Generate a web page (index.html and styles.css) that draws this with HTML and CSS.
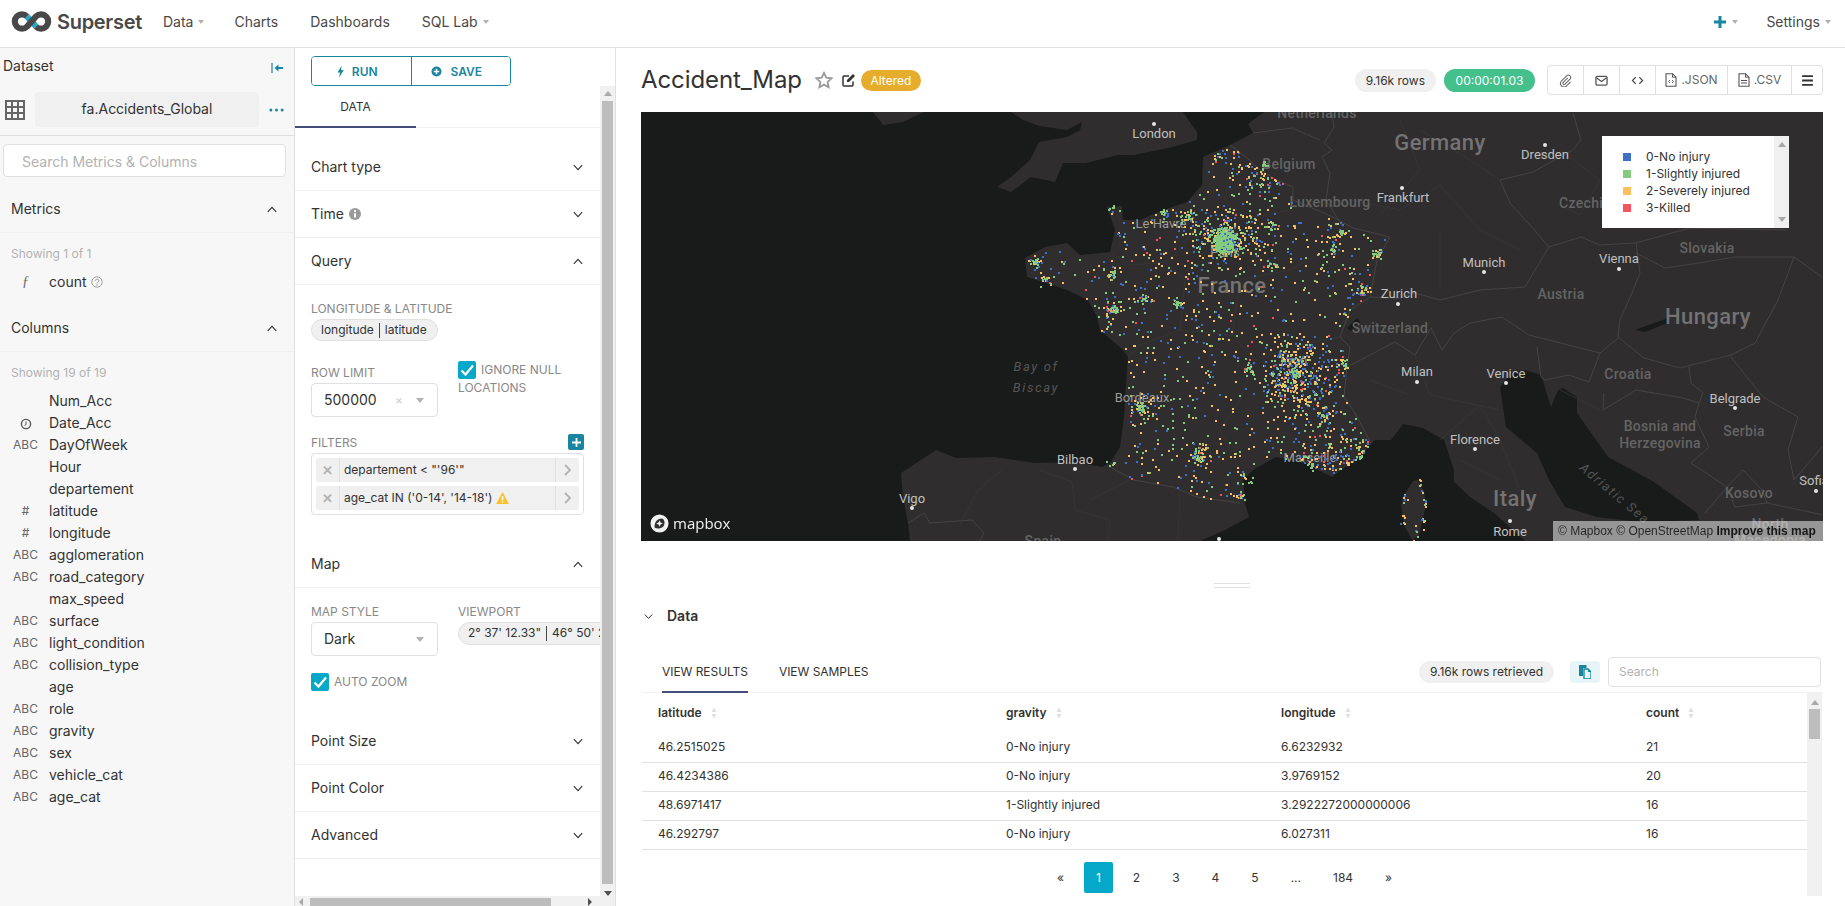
FILE: index.html
```html
<!DOCTYPE html>
<html lang="en">
<head>
<meta charset="utf-8">
<title>Accident_Map</title>
<link rel="stylesheet" href="styles.css">
</head>
<body>
<svg class="sprite" aria-hidden="true">
  <symbol id="down" viewBox="0 0 12 8"><path d="M1 1.2 6 6.6 11 1.2" fill="none" stroke="#323232" stroke-width="1.3"/></symbol>
  <symbol id="up" viewBox="0 0 12 8"><path d="M1 6.8 6 1.4 11 6.8" fill="none" stroke="#323232" stroke-width="1.3"/></symbol>
  <symbol id="sort" viewBox="0 0 6 12"><path d="M3 0.5 5.6 5H.4zM3 11.5.4 7h5.2z" fill="#e0e0e0"/></symbol>
  <symbol id="check" viewBox="0 0 18 18"><path d="M3.5 9.5 7.5 13.5 15 4.5" fill="none" stroke="#fff" stroke-width="2.2"/></symbol>
</svg>

<nav class="nav">
  <svg class="logo" viewBox="0 0 42 22">
    <path d="M16.3 5.7 25.7 16.3" fill="none" stroke="#20a7c9" stroke-width="6.4"/>
    <path d="M16.3 5.7A7.5 7.5 0 1 0 16.3 16.3L25.7 5.7A7.5 7.5 0 1 1 25.7 16.3" fill="none" stroke="#484848" stroke-width="6.4"/>
  </svg>
  <span class="brand">Superset</span>
  <a class="nav-item nav-data">Data<i class="caret"></i></a>
  <a class="nav-item nav-charts">Charts</a>
  <a class="nav-item nav-dash">Dashboards</a>
  <a class="nav-item nav-sql">SQL Lab<i class="caret"></i></a>
  <span class="nav-fill"></span>
  <svg class="nav-plus" viewBox="0 0 12 12"><path d="M6 0v12M0 6h12" stroke="#1a85a0" stroke-width="3"/></svg>
  <i class="caret caret-plus"></i>
  <a class="nav-item nav-settings">Settings<i class="caret"></i></a>
</nav>

<main class="main">
  <aside class="side">
    <div class="side-head">
      <span>Dataset</span>
      <svg class="collapse" viewBox="0 0 12 12"><path d="M1 1v10" stroke="#1a85a0" stroke-width="1.2"/><path d="M3.5 6 7.5 2.5V5H12V7H7.5V9.5z" fill="#1a85a0"/></svg>
    </div>
    <div class="ds-row">
      <svg class="grid-ic" viewBox="0 0 20 20"><path d="M1 1h18v18H1zM7 1v18M13 1v18M1 7h18M1 13h18" fill="none" stroke="#666" stroke-width="2"/></svg>
      <div class="ds-name">fa.Accidents_Global</div>
      <svg class="ds-more" viewBox="0 0 16 4"><circle cx="2" cy="2" r="1.6"/><circle cx="8" cy="2" r="1.6"/><circle cx="14" cy="2" r="1.6"/></svg>
    </div>
    <div class="side-search">Search Metrics &amp; Columns</div>

    <div class="side-sec side-sec-m"><span>Metrics</span><svg class="chev"><use href="#up"/></svg></div>
    <div class="showing showing-m">Showing 1 of 1</div>
    <ul class="cols cols-m">
      <li><b class="ty ty-f">ƒ</b>count
        <svg class="q-ic" viewBox="0 0 12 12"><circle cx="6" cy="6" r="5.2" fill="none" stroke="#999" stroke-width=".9"/><path d="M4.3 4.8C4.3 2.7 7.8 2.7 7.8 4.8 7.8 6 6 6 6 7.4" fill="none" stroke="#999"/><circle cx="6" cy="9" r=".7" fill="#999"/></svg>
      </li>
    </ul>

    <div class="side-sec side-sec-c"><span>Columns</span><svg class="chev"><use href="#up"/></svg></div>
    <div class="showing showing-c">Showing 19 of 19</div>
    <ul class="cols">
      <li><b class="ty"></b>Num_Acc</li>
      <li><b class="ty"><svg class="clock" viewBox="0 0 12 12"><circle cx="6" cy="6" r="4.6" fill="none" stroke="#555" stroke-width="1.4"/><path d="M6 3.5V6.5L4.5 7.5" fill="none" stroke="#555"/></svg></b>Date_Acc</li>
      <li><b class="ty">ABC</b>DayOfWeek</li>
      <li><b class="ty"></b>Hour</li>
      <li><b class="ty"></b>departement</li>
      <li><b class="ty">#</b>latitude</li>
      <li><b class="ty">#</b>longitude</li>
      <li><b class="ty">ABC</b>agglomeration</li>
      <li><b class="ty">ABC</b>road_category</li>
      <li><b class="ty"></b>max_speed</li>
      <li><b class="ty">ABC</b>surface</li>
      <li><b class="ty">ABC</b>light_condition</li>
      <li><b class="ty">ABC</b>collision_type</li>
      <li><b class="ty"></b>age</li>
      <li><b class="ty">ABC</b>role</li>
      <li><b class="ty">ABC</b>gravity</li>
      <li><b class="ty">ABC</b>sex</li>
      <li><b class="ty">ABC</b>vehicle_cat</li>
      <li><b class="ty">ABC</b>age_cat</li>
    </ul>
  </aside>

  <section class="ctrl">
    <div class="ctrl-top">
      <div class="run-group">
        <button class="run-btn"><svg class="bolt" viewBox="0 0 8 14"><path d="M5.2 0 .6 8H3.4L2.4 14 7.6 5.4H4.6z" fill="#1a85a0"/></svg>RUN</button>
        <button class="run-btn"><svg class="plus-c" viewBox="0 0 12 12"><circle cx="6" cy="6" r="5.5" fill="#1a85a0"/><path d="M6 3v6M3 6h6" stroke="#fff" stroke-width="1.6"/></svg>SAVE</button>
      </div>
    </div>
    <div class="ctrl-body">
      <div class="ctrl-content">
        <div class="ctrl-tabs"><div class="ctrl-tab">DATA</div></div>
        <div class="sec sec-first">Chart type<svg class="chev"><use href="#down"/></svg></div>
        <div class="sec"><span>Time <svg class="info" viewBox="0 0 12 12"><circle cx="6" cy="6" r="6" fill="#999"/><path d="M6 5.2V9.6" stroke="#fff" stroke-width="2"/><circle cx="6" cy="3.1" r="1.1" fill="#fff"/></svg></span><svg class="chev"><use href="#down"/></svg></div>
        <div class="sec">Query<svg class="chev"><use href="#up"/></svg></div>
        <div class="sec-body">
          <div class="lbl">LONGITUDE &amp; LATITUDE</div>
          <div class="pill-field"><span>longitude</span><i class="pill-sep"></i><span>latitude</span></div>
          <div class="two">
            <div class="col col-pad">
              <div class="lbl">ROW LIMIT</div>
              <div class="select"><span>500000</span><span class="sel-x">×</span><i class="sel-caret"></i></div>
            </div>
            <div class="col">
              <div class="chk-label"><svg class="chk"><use href="#check"/></svg><span class="chk-t">IGNORE NULL LOCATIONS</span></div>
            </div>
          </div>
          <div class="filters-head"><span class="lbl">FILTERS</span><span class="add"><svg viewBox="0 0 10 10"><path d="M5 0v10M0 5h10" stroke="#fff" stroke-width="2"/></svg></span></div>
          <div class="filters">
            <div class="filter"><span class="f-x">✕</span><span class="f-t">departement &lt; "'96'"</span><span class="f-go"><svg viewBox="0 0 7 12"><path d="M1 1 6 6 1 11" fill="none" stroke="#b2b2b2" stroke-width="1.8"/></svg></span></div>
            <div class="filter"><span class="f-x">✕</span><span class="f-t">age_cat IN ('0-14', '14-18') <svg class="warn" viewBox="0 0 14 13"><path d="M7 0 14 13H0z" fill="#fbc02d"/><path d="M7 4.5V9" stroke="#fff" stroke-width="1.6"/><circle cx="7" cy="10.8" r=".9" fill="#fff"/></svg></span><span class="f-go"><svg viewBox="0 0 7 12"><path d="M1 1 6 6 1 11" fill="none" stroke="#b2b2b2" stroke-width="1.8"/></svg></span></div>
          </div>
        </div>
        <div class="sec sec-map">Map<svg class="chev"><use href="#up"/></svg></div>
        <div class="sec-body">
          <div class="two two-map">
            <div class="col">
              <div class="lbl">MAP STYLE</div>
              <div class="select"><span>Dark</span><i class="sel-caret"></i></div>
            </div>
            <div class="col">
              <div class="lbl">VIEWPORT</div>
              <div class="pill-field pill-vp"><span>2° 37' 12.33"</span><i class="pill-sep"></i><span>46° 50' 21.04"</span></div>
            </div>
          </div>
          <div class="auto"><svg class="chk"><use href="#check"/></svg><span class="chk-t">AUTO ZOOM</span></div>
        </div>
        <div class="sec sec-ps">Point Size<svg class="chev"><use href="#down"/></svg></div>
        <div class="sec">Point Color<svg class="chev"><use href="#down"/></svg></div>
        <div class="sec">Advanced<svg class="chev"><use href="#down"/></svg></div>
      </div>
      <div class="vbar"><i class="arr arr-up"></i><div class="vthumb"></div><i class="arr arr-dn"></i></div>
    </div>
    <div class="hbar"><i class="arr-l"></i><div class="hthumb"></div><i class="arr-r"></i></div>
  </section>

  <section class="pane">
    <header class="head">
      <h1 class="title">Accident_Map</h1>
      <svg class="star" viewBox="0 0 24 24"><path d="M12 2.500 15 9l7 .8-5.200 4.800 1.400 7L12 18.200l-6.200 3.400 1.400-7L2 9.800 9 9z" fill="none" stroke="#999" stroke-width="2.400"/></svg>
      <svg class="edit" viewBox="0 0 14 14"><path d="M11 8.500V12a1 1 0 0 1-1 1H2a1 1 0 0 1-1-1V4a1 1 0 0 1 1-1H7" fill="none" stroke="#323232" stroke-width="1.500"/><path d="M5 7 11 1l2 2-6 6H5z" fill="#323232"/></svg>
      <span class="altered">Altered</span>
      <span class="head-fill"></span>
      <span class="tag">9.16k rows</span>
      <span class="tag tag-ok">00:00:01.03</span>
      <div class="btns">
        <a class="btn"><svg class="btn-ic" viewBox="0 0 14 14"><path d="M9.500 4.200 4.600 9.100a1.300 1.300 0 0 0 1.900 1.800l5.300-5.300a2.500 2.500 0 0 0-3.600-3.600L2.800 7.400a3.800 3.800 0 0 0 5.400 5.400L12.500 8.500" fill="none" stroke="#666" stroke-width="1.100"/></svg></a>
        <a class="btn"><svg class="btn-ic" viewBox="0 0 14 14"><rect x="1" y="2.500" width="12" height="9.500" rx="1.500" fill="none" stroke="#555" stroke-width="1.400"/><path d="M1.500 4 7 8 12.500 4" fill="none" stroke="#555" stroke-width="1.400"/></svg></a>
        <a class="btn"><svg class="btn-ic" viewBox="0 0 14 14"><path d="M5 3.500 1.500 7 5 10.500M9 3.500 12.500 7 9 10.500" fill="none" stroke="#444" stroke-width="1.200"/></svg></a>
        <a class="btn btn-t"><svg class="btn-file" viewBox="0 0 12 14"><path d="M1 .7H7.500L11 4.200V13.300H1z" fill="none" stroke="#555" stroke-width="1.100"/><path d="M7.500 .7V4.200H11" fill="none" stroke="#555"/><path d="M3.700 8.500 5 7M3.700 8.500 5 10M8.300 8.500 7 7M8.300 8.500 7 10" stroke="#555" stroke-width=".9"/></svg>.JSON</a>
        <a class="btn btn-t"><svg class="btn-file" viewBox="0 0 12 14"><path d="M1 .7H7.500L11 4.200V13.300H1z" fill="none" stroke="#555" stroke-width="1.100"/><path d="M7.500 .7V4.200H11M3 7.500H9M3 10H9" fill="none" stroke="#555"/></svg>.CSV</a>
        <a class="btn btn-m"><svg class="btn-ic" viewBox="0 0 12 12"><path d="M1 2h10M1 6h10M1 10h10" stroke="#323232" stroke-width="1.700"/></svg></a>
      </div>
    </header>

    <div class="map">
      <svg class="map-svg" viewBox="641 112 1182 429" preserveAspectRatio="none">
        <rect x="641" y="112" width="1182" height="429" fill="#2f2d2d"/>
        <!-- sea -->
        <path class="sea" d="M641 112H1265L1257 117 1248 124 1253 133 1230 145 1203 157 1202 185 1187 202 1163 210 1140 220 1123 220 1122 206 1107 207 1115 230 1110 252 1080 255 1067 243 1045 247 1025 258 1027 277 1043 282 1067 290 1088 300 1097 317 1100 330 1123 350 1128 357 1126 383 1124 417 1120 447 1110 463 1102 467 1075 462 1035 463 995 457 956 458 936 450 901 473 903 497 908 523 910 541H641z"/>
        <path class="sea" d="M1200 541 1225 530 1249 517 1245 503 1243 480 1253 470 1276 457 1304 463 1332 477 1359 457 1375 440 1391 440 1403 424 1423 428 1444 440 1454 470 1454 482 1470 497 1494 513 1525 541z"/>
        <path class="sea" d="M1500 387 1512 372 1525 370 1541 375 1551 407 1558 390 1563 388 1577 397 1577 413 1608 457 1654 482 1697 513 1699 520 1640 522 1597 517 1565 507 1549 480 1537 453 1506 427 1502 400z"/>
        <path class="sea" d="M1635 330 1668 318 1670 322 1645 332z"/>
        <path class="sea" d="M1347 328 1357 318 1360 322 1351 331z"/>
        <!-- land over the Atlantic -->
        <path class="land" d="M1011 112 1023 120 1039 126 1067 130 1082 122 1080 130 1067 137 1039 142 1030 160 1011 177 997 187 1011 192 1031 177 1055 182 1063 163 1086 163 1118 155 1134 155 1173 147 1197 140 1197 132 1185 115 1183 112z"/>
        <path class="land" d="M873 112 883 125 903 122 924 112z"/>
        <path class="land" d="M1413 481 1418 480 1424 492 1426 505 1419 536 1412 540 1404 525 1401 505 1403 497z"/>
        <!-- country borders -->
        <g class="bd">
          <path d="M1230 145 1247 158 1260 170 1277 180 1293 187 1293 200 1333 217 1353 228 1390 237 1377 260 1370 297 1350 310 1340 337 1350 347 1347 367 1344 397 1355 413 1371 443"/>
          <path d="M1253 133 1292 128 1320 140M1332 113 1334 127 1324 143 1332 150 1322 157 1330 173 1326 200 1343 227"/>
          <path d="M1370 297 1400 298 1415 293 1440 300 1480 290 1525 287 1549 247 1530 225 1510 203 1500 180 1533 172 1573 150 1581 140 1573 113"/>
          <path d="M1549 247 1581 237 1600 245 1636 243 1690 228 1786 230M1636 243 1640 273 1632 293 1620 320 1618 337 1644 358 1680 368 1731 355 1755 343 1778 300 1794 257 1822 277M1636 253 1665 268 1699 263 1735 257 1794 257"/>
          <path d="M1347 367 1395 342 1415 355 1431 328 1442 350 1454 333 1470 323 1502 317 1529 335 1600 353 1618 338M1537 347 1541 377 1545 380 1569 375 1589 382 1600 353"/>
          <path d="M1604 393 1603 410 1636 390 1683 398 1699 403 1695 417 1709 447 1691 463 1727 487 1705 513M1689 367 1691 383 1703 393 1699 403M1731 357 1763 397 1798 417 1788 450 1794 480 1822 447M1727 487 1743 470 1762 490 1767 503 1735 507 1727 487M1767 503 1800 510 1823 515"/>
          <path d="M1110 467 1134 480 1173 487 1197 497 1240 503M908 523 924 513 930 523 972 520 984 533 980 541"/>
        </g>
        <g class="bd-dim">
          <path d="M1110 252 1130 265 1165 262 1180 250 1200 220M1165 262 1185 280 1180 330 1140 345 1128 357M1180 330 1232 335 1255 360 1240 400 1220 430 1240 470M1232 335 1240 280 1290 270 1330 248M1255 360 1300 345 1340 337M1230 172 1225 200 1240 220 1290 210"/>
          <path d="M1002 470 978 490 960 525M1040 470 1072 482 1075 510 1110 520 1108 541M1130 480 1090 500M1180 490 1178 541"/>
          <path d="M1415 355 1430 395 1500 410M1440 440 1480 405 1500 440 1510 465 1520 490M1460 460 1500 480M1370 380 1410 395M1560 390 1600 410"/>
          <path d="M1350 200 1400 210 1440 185 1480 230 1520 250M1420 130 1470 160 1500 180M1440 230 1440 290M1400 120 1420 170 1380 215M1560 150 1600 180 1580 215 1560 205"/>
        </g>
        <!-- city dots -->
        <g class="dots">
          <circle cx="1154" cy="124" r="2"/><circle cx="1402" cy="188" r="2"/><circle cx="1545" cy="145" r="2"/><circle cx="1484" cy="272" r="2"/><circle cx="1619" cy="269" r="2"/><circle cx="1398" cy="304" r="2"/><circle cx="1417" cy="382" r="2"/><circle cx="1506" cy="383" r="2"/><circle cx="1735" cy="408" r="2"/><circle cx="1475" cy="449" r="2"/><circle cx="1510" cy="521" r="2"/><circle cx="1816" cy="491" r="2"/><circle cx="1075" cy="469" r="2"/><circle cx="912" cy="508" r="2"/><circle cx="1219" cy="539" r="2"/>
        </g>
        <g class="lb city">
          <text x="1154" y="138">London</text><text x="1403" y="202">Frankfurt</text><text x="1545" y="159">Dresden</text><text x="1484" y="267">Munich</text><text x="1619" y="263">Vienna</text><text x="1399" y="298">Zurich</text><text x="1417" y="376">Milan</text><text x="1506" y="378">Venice</text><text x="1735" y="403">Belgrade</text><text x="1475" y="444">Florence</text><text x="1510" y="536">Rome</text><text x="1814" y="485">Sofia</text><text x="1075" y="464">Bilbao</text><text x="912" y="503">Vigo</text>
        </g>
        <g class="lb city-dim">
          <text x="1161" y="228">Le Havre</text><text x="1225" y="257">Paris</text><text x="1294" y="365">Lyon</text><text x="1310" y="462">Marseille</text><text x="1142" y="402">Bordeaux</text>
        </g>
        <g class="lb country">
          <text x="1317" y="118">Netherlands</text><text x="1289" y="169">Belgium</text><text x="1330" y="207">Luxembourg</text><text x="1585" y="208">Czechia</text><text x="1707" y="253">Slovakia</text><text x="1561" y="299">Austria</text><text x="1390" y="333">Switzerland</text><text x="1628" y="379">Croatia</text><text x="1660" y="431">Bosnia and</text><text x="1660" y="448">Herzegovina</text><text x="1744" y="436">Serbia</text><text x="1749" y="498">Kosovo</text><text x="1770" y="529">North</text><text x="1770" y="545">Macedonia</text><text x="1043" y="546">Spain</text>
        </g>
        <g class="lb big">
          <text x="1440" y="150">Germany</text><text x="1708" y="324">Hungary</text><text x="1515" y="506">Italy</text><text x="1232" y="293">France</text>
        </g>
        <g class="lb sea-lb">
          <text x="1036" y="371">Bay of</text><text x="1036" y="392">Biscay</text>
          <text transform="translate(1612 497) rotate(40)">Adriatic Sea</text>
        </g>
      </svg>
      <canvas id="points" class="map-points" width="1182" height="429"></canvas>
      <div class="legend">
        <ul class="legend-list">
          <li><i class="sw sw-b"></i>0-No injury</li>
          <li><i class="sw sw-g"></i>1-Slightly injured</li>
          <li><i class="sw sw-o"></i>2-Severely injured</li>
          <li><i class="sw sw-r"></i>3-Killed</li>
        </ul>
        <div class="legend-bar"><i class="arr arr-up"></i><i class="arr arr-dn"></i></div>
      </div>
      <div class="mapbox">
        <svg viewBox="0 0 20 20"><circle cx="10" cy="10" r="9.500" fill="#f2f2f2"/><path d="M5 14.500C4 10 7 4.500 13 4.700 16 6 16 12 13 14 10 15.800 7 15.500 5 14.500z" fill="#1a1a1a" opacity=".9"/><path d="M10 6.500 11 9 13.500 10 11 11 10 13.500 9 11 6.500 10 9 9z" fill="#f2f2f2"/></svg>
        <span>mapbox</span>
      </div>
      <div class="attr">© Mapbox © OpenStreetMap <b>Improve this map</b></div>
    </div>

    <div class="resize"></div>
    <div class="data-head"><svg class="chev-d"><use href="#down"/></svg><span>Data</span></div>
    <div class="res-bar">
      <a class="res-tab res-tab-on">VIEW RESULTS</a>
      <a class="res-tab">VIEW SAMPLES</a>
      <span class="head-fill"></span>
      <span class="tag tag-res">9.16k rows retrieved</span>
      <span class="copy"><svg viewBox="0 0 12 14"><path d="M0 0H7.500V3H4V11H0z" fill="#1a85a0"/><path d="M5 4H9L12 7V14H5z" fill="none" stroke="#1a85a0" stroke-width="1.400"/><path d="M9 4V7H12" fill="#1a85a0"/></svg></span>
      <div class="res-search">Search</div>
    </div>
    <div class="res-body">
      <div class="res-main">
        <table class="tbl">
          <thead>
            <tr><th class="c1">latitude<svg class="sort"><use href="#sort"/></svg></th><th class="c2">gravity<svg class="sort"><use href="#sort"/></svg></th><th class="c3">longitude<svg class="sort"><use href="#sort"/></svg></th><th class="c4">count<svg class="sort"><use href="#sort"/></svg></th></tr>
          </thead>
          <tbody>
            <tr><td>46.2515025</td><td>0-No injury</td><td>6.6232932</td><td>21</td></tr>
            <tr><td>46.4234386</td><td>0-No injury</td><td>3.9769152</td><td>20</td></tr>
            <tr><td>48.6971417</td><td>1-Slightly injured</td><td>3.2922272000000006</td><td>16</td></tr>
            <tr><td>46.292797</td><td>0-No injury</td><td>6.027311</td><td>16</td></tr>
          </tbody>
        </table>
        <div class="pager">
          <a>«</a><a class="on">1</a><a>2</a><a>3</a><a>4</a><a>5</a><a>...</a><a>184</a><a>»</a>
        </div>
      </div>
      <div class="tbar"><i class="arr arr-up"></i><div class="tthumb"></div></div>
    </div>
  </section>
</main>
<script src="app.js"></script>
</body>
</html>
```
FILE: styles.css
```css
* { box-sizing: border-box; }
html, body { margin: 0; height: 906px; overflow: hidden; }
body { font: 14px/1.4 Inter, "Liberation Sans", sans-serif; color: #323232; background: #fff; display: flex; flex-direction: column; }
ul { list-style: none; margin: 0; padding: 0; }
i { display: block; }
.sprite { display: none; }

/* nav */
.nav { flex: none; height: 48px; border-bottom: 1px solid #e0e0e0; display: flex; align-items: center; padding: 0 0 4px 11px; }
.logo { width: 41px; height: 21px; flex: none; }
.brand { margin-left: 5px; font-size: 20px; font-weight: 600; color: #484848; letter-spacing: -.3px; width: 80px; white-space: nowrap; }
.nav-item { display: flex; align-items: center; color: #484848; white-space: nowrap; }
.nav-data { margin-left: 26px; }
.nav-charts { margin-left: 30px; }
.nav-dash { margin-left: 32px; }
.nav-sql { margin-left: 32px; }
.caret { width: 0; height: 0; border: 3px solid transparent; border-top: 4px solid #b2b2b2; border-bottom: 0; margin-left: 5px; }
.nav-fill { flex: 1; }
.nav-plus { width: 12px; height: 12px; flex: none; }
.caret-plus { margin-left: 6px; }
.nav-settings { margin-left: 28px; margin-right: 14px; }

.main { flex: 1; display: flex; min-height: 0; }

/* dataset panel */
.side { flex: none; width: 295px; background: #f7f7f7; border-right: 1px solid #e0e0e0; }
.side-head { height: 36px; display: flex; align-items: center; justify-content: space-between; padding: 0 11px 0 3px; }
.collapse { width: 12px; height: 12px; margin-top: 4px; }
.ds-row { height: 52px; border-bottom: 1px solid #e0e0e0; display: flex; align-items: flex-start; padding: 8px 0 0 5px; }
.grid-ic { width: 20px; height: 20px; margin: 8px 10px 0 0; flex: none; }
.ds-name { width: 224px; height: 35px; background: #f0f0f0; border-radius: 4px; display: flex; align-items: center; justify-content: center; padding-bottom: 1px; }
.ds-more { width: 15px; height: 4px; margin: 16px 0 0 10px; fill: #1a85a0; }
.side-search { width: 283px; height: 33px; margin: 8px 0 0 3px; border: 1px solid #e0e0e0; border-radius: 4px; background: #fff; color: #b2b2b2; padding: 0 0 0 18px; line-height: 33px; }
.side-sec { height: 47px; border-bottom: 1px solid #f0f0f0; display: flex; align-items: center; justify-content: space-between; padding: 0 17px 0 11px; }
.side-sec-m { margin-top: 9px; }
.side-sec-c { margin-top: 12px; }
.chev { width: 10px; height: 7px; flex: none; }
.showing { font-size: 12px; line-height: 16px; color: #b2b2b2; padding-left: 11px; margin-bottom: 9px; }
.showing-m { margin-top: 13px; }
.showing-c { margin-top: 13px; }
.cols li { height: 22px; line-height: 22px; display: flex; align-items: center; white-space: nowrap; }
.ty { flex: none; width: 49px; padding-right: 1px; padding-left: 3px; text-align: center; font-size: 12px; font-weight: 400; color: #666; }
.ty-f { font-family: "Liberation Serif", serif; font-style: italic; font-size: 14px; }
.q-ic { width: 12px; height: 12px; margin-left: 4px; }
.clock { width: 12px; height: 12px; display: block; margin: 2px auto 0; }

/* controls */
.ctrl { flex: none; width: 321px; border-right: 1px solid #e0e0e0; display: flex; flex-direction: column; min-height: 0; }
.ctrl-top { flex: none; height: 38px; padding: 8px 0 0 16px; }
.run-group { width: 200px; height: 30px; display: flex; border: 1px solid #1a85a0; border-radius: 4px; overflow: hidden; }
.run-btn { flex: 1; border: 0; background: #fff; color: #1a85a0; font: 600 12px Inter, sans-serif; display: flex; align-items: center; justify-content: center; gap: 8px; padding: 0 8px 0 0; }
.run-btn + .run-btn { border-left: 1px solid #1a85a0; }
.bolt { width: 7px; height: 13px; }
.plus-c { width: 11px; height: 11px; }
.ctrl-body { flex: 1; display: flex; min-height: 0; }
.ctrl-content { flex: 1; min-width: 0; overflow: hidden; }
.ctrl-tabs { height: 42px; border-bottom: 1px solid #f0f0f0; }
.ctrl-tab { width: 121px; height: 42px; border-bottom: 2px solid #444e7c; text-align: center; font-size: 12px; line-height: 42px; }
.sec { height: 47px; border-bottom: 1px solid #f0f0f0; display: flex; align-items: center; justify-content: space-between; padding: 0 17px 0 16px; }
.sec-first { margin-top: 16px; }
.sec-map { margin-top: 26px; }
.sec-ps { margin-top: 27px; }
.info { width: 12px; height: 12px; margin-left: 1px; vertical-align: -1px; }
.sec-body { padding: 16px 0 0 16px; }
.lbl { display: block; font-size: 12px; line-height: 16px; color: #888; white-space: nowrap; }
.pill-field { margin-top: 2px; width: 127px; height: 22px; border: 1px solid #e0e0e0; border-radius: 11px; background: #f0f0f0; display: flex; align-items: center; padding-left: 9px; font-size: 12px; white-space: nowrap; gap: 5px; }
.pill-sep { flex: none; width: 1px; height: 15px; background: #484848; }
.pill-vp { width: 210px; height: 23px; border-radius: 12px; }
.two { display: flex; gap: 20px; margin-top: 20px; height: 56px; }
.two-map { margin-top: 0; height: 52px; }
.col { flex: none; width: 127px; }
.col-pad { padding-top: 4px; }
.select { margin-top: 2px; height: 34px; border: 1px solid #e0e0e0; border-radius: 4px; background: #fff; display: flex; align-items: center; padding: 0 12px; }
.select > span:first-child { flex: 1; }
.sel-x { color: #ccc; font-size: 12px; margin-right: 13px; }
.sel-caret { width: 0; height: 0; border: 4px solid transparent; border-top: 5px solid #b2b2b2; border-bottom: 0; margin-right: 1px; }
.chk-label { font-size: 12px; line-height: 18px; color: #888; width: 140px; }
.chk { width: 18px; height: 18px; background: #06a8c9; border-radius: 2px; vertical-align: top; flex: none; }
.chk-t { margin-left: 5px; }
.filters-head { width: 273px; margin-top: 18px; height: 16px; display: flex; align-items: center; justify-content: space-between; }
.add { width: 16px; height: 16px; background: #1a85a0; border-radius: 2px; display: flex; align-items: center; justify-content: center; margin-top: -2px; }
.add svg { width: 9px; height: 9px; }
.filters { margin-top: 2px; width: 273px; height: 62px; border: 1px solid #e0e0e0; border-radius: 4px; padding: 4px; display: flex; flex-direction: column; gap: 4px; }
.filter { height: 24px; background: #f0f0f0; border-radius: 2px; display: flex; align-items: center; font-size: 12px; white-space: nowrap; }
.f-x { width: 24px; flex: none; height: 100%; border-right: 1px solid #e0e0e0; color: #b2b2b2; font-size: 13px; font-weight: 700; line-height: 24px; text-align: center; }
.f-t { flex: 1; padding-left: 4px; }
.f-go { width: 24px; flex: none; height: 100%; border-left: 1px solid #e0e0e0; display: flex; align-items: center; justify-content: center; }
.f-go svg { width: 7px; height: 12px; }
.warn { width: 13px; height: 12px; vertical-align: -2px; }
.auto { margin-top: 17px; font-size: 12px; line-height: 18px; color: #888; display: flex; height: 18px; }
.vbar { flex: none; width: 15px; background: #f1f1f1; display: flex; flex-direction: column; align-items: center; padding: 5px 0 0; }
.arr-up { width: 0; height: 0; border: 4px solid transparent; border-bottom: 5px solid #a8a8a8; border-top: 0; flex: none; }
.arr-dn { width: 0; height: 0; border: 4px solid transparent; border-top: 5px solid #505050; border-bottom: 0; flex: none; margin-top: 7px; }
.vthumb { flex: 1; width: 11px; background: #bdbdbd; margin-top: 5px; }
.hbar { flex: none; height: 10px; background: #f1f1f1; display: flex; align-items: flex-end; padding: 0 20px 0 4px; }
.arr-l { width: 0; height: 0; border: 4px solid transparent; border-right: 4px solid #a8a8a8; border-left: 0; }
.arr-r { width: 0; height: 0; border: 4px solid transparent; border-left: 4px solid #505050; border-right: 0; margin-left: 37px; }
.hthumb { width: 241px; height: 8px; background: #bdbdbd; margin-left: 7px; }

/* chart pane */
.pane { flex: 1; min-width: 0; padding: 0 22px 0 25px; display: flex; flex-direction: column; }
.head { flex: none; height: 64px; display: flex; align-items: center; }
.title { margin: 0; font-size: 24px; font-weight: 400; line-height: 32px; color: #323232; white-space: nowrap; letter-spacing: -.1px; }
.star { width: 18px; height: 18px; margin-left: 13px; flex: none; }
.edit { width: 14px; height: 14px; margin-left: 9px; flex: none; }
.altered { margin-left: 5px; height: 21px; width: 60px; border-radius: 11px; background: #e6ac2c; color: #fff; font-size: 12px; line-height: 21px; text-align: center; }
.head-fill { flex: 1; }
.tag { height: 23px; border-radius: 12px; background: #f0f0f0; font-size: 12px; line-height: 23px; padding: 0 11px; white-space: nowrap; }
.tag-ok { margin-left: 8px; background: #44c08c; color: #fff; width: 91px; text-align: center; padding: 0; }
.btns { margin-left: 12px; height: 30px; display: flex; border: 1px solid #e0e0e0; border-radius: 4px; }
.btn { display: flex; align-items: center; justify-content: center; gap: 4px; width: 36px; border-right: 1px solid #e0e0e0; font-size: 12px; color: #666; flex: none; }
.btn-t { width: 72px; }
.btn-t + .btn-t { width: 64px; }
.btn-m { width: 30px; border-right: 0; }
.btn-ic { width: 13px; height: 13px; }
.btn-file { width: 12px; height: 14px; }

.map { flex: none; height: 429px; position: relative; overflow: hidden; background: #191a1a; }
.map-svg { display: block; width: 100%; height: 100%; }
.sea { fill: #191a1a; }
.land { fill: #2f2d2d; }
.bd path { fill: none; stroke: #454444; stroke-width: 1; }
.bd-dim path { fill: none; stroke: #383636; stroke-width: .8; }
.dots circle { fill: #e6e6e6; }
.lb text { font-family: Roboto, "Liberation Sans", sans-serif; text-anchor: middle; }
.city text { font-size: 13px; fill: #c0c0c0; }
.city-dim text { font-size: 13px; fill: #9c9c9c; }
.country text { font-size: 14px; fill: #646464; font-weight: 500; letter-spacing: .3px; }
.big text { font-size: 22px; fill: #737373; font-weight: 500; letter-spacing: .4px; }
.sea-lb text { font-size: 13px; font-style: italic; fill: #555; letter-spacing: 1.6px; }
.map-points { position: absolute; left: 0; top: 0; }
.legend { position: absolute; left: 961px; top: 24px; width: 187px; height: 92px; background: #fff; display: flex; }
.legend-list { flex: 1; padding: 12px 0 0 21px; font-size: 12px; }
.legend-list li { height: 17px; line-height: 17px; display: flex; align-items: center; white-space: nowrap; }
.sw { width: 8px; height: 8px; margin-right: 15px; flex: none; }
.sw-b { background: #3f6fc6; }
.sw-g { background: #85cb7f; }
.sw-o { background: #fdc05f; }
.sw-r { background: #f4535f; }
.legend-bar { flex: none; width: 15px; background: #f0f0f0; display: flex; flex-direction: column; align-items: center; justify-content: space-between; padding: 6px 0; }
.legend-bar .arr-up { border-bottom-color: #a8a8a8; }
.legend-bar .arr-dn { border-top-color: #a8a8a8; }
.mapbox { position: absolute; left: 9px; bottom: 8px; display: flex; align-items: center; gap: 4px; color: #f2f2f2; font: 500 15px "Open Sans", sans-serif; }
.mapbox svg { width: 19px; height: 19px; }
.attr { position: absolute; right: 0; bottom: 0; height: 20px; width: 270px; background: rgba(255,255,255,.5); font: 12px/20px "Liberation Sans", sans-serif; color: rgba(0,0,0,.75); padding-left: 5px; white-space: nowrap; overflow: hidden; }
.attr b { color: rgba(0,0,0,.85); }

.resize { flex: none; width: 36px; height: 5px; margin: 42px auto 0; border-top: 1px solid #e0e0e0; border-bottom: 1px solid #e0e0e0; }
.data-head { flex: none; height: 22px; margin-top: 17px; display: flex; align-items: center; font-weight: 600; }
.chev-d { width: 9px; height: 7px; margin: 0 14px 0 3px; flex: none; }
.res-bar { flex: none; height: 66px; margin-left: 1px; padding: 30px 2px 0 20px; border-bottom: 1px solid #f0f0f0; display: flex; align-items: flex-start; }
.res-tab { font-size: 12px; line-height: 16px; padding: 7px 0 11px; height: 36px; white-space: nowrap; margin-right: 31px; letter-spacing: -.05px; }
.res-tab-on { border-bottom: 2px solid #444e7c; }
.tag-res { margin: 4px 0 0; height: 22px; line-height: 22px; border-radius: 11px; width: 135px; text-align: center; padding: 0; }
.copy { margin: 4px 8px 0 16px; width: 30px; height: 22px; background: #e7f5f8; border-radius: 4px; display: flex; align-items: center; justify-content: center; }
.copy svg { width: 12px; height: 14px; }
.res-search { width: 213px; height: 30px; border: 1px solid #e0e0e0; border-radius: 4px; color: #b2b2b2; font-size: 12px; line-height: 28px; padding-left: 10px; }
.res-body { flex: none; height: 203px; margin-left: 1px; display: flex; }
.res-main { width: 1165px; flex: none; }
.tbl { border-collapse: collapse; table-layout: fixed; width: 1165px; font-size: 12px; }
.tbl th { height: 40px; padding: 0 0 0 16px; text-align: left; font-weight: 600; color: #323232; }
.tbl td { height: 29px; padding: 0 0 0 16px; border-bottom: 1px solid #e0e0e0; }
.c1 { width: 348px; }
.c2 { width: 275px; }
.c3 { width: 365px; }
.c4 { width: 177px; }
.sort { width: 6px; height: 12px; margin-left: 9px; vertical-align: -2px; }
.pager { margin-top: 12px; display: flex; justify-content: center; gap: 8px; font-size: 12px; }
.pager a { height: 31px; line-height: 31px; padding: 0 12px; border-radius: 2px; }
.pager .on { background: #06a8c9; color: #fff; }
.tbar { flex: none; width: 15px; background: #f1f1f1; display: flex; flex-direction: column; align-items: center; padding-top: 7px; }
.tthumb { width: 11px; height: 30px; background: #bdbdbd; margin-top: 4px; }
```
FILE: app.js
```js
// Scatter layer for the deck.gl map: accident points clustered around French cities.
(function () {
  var cv = document.getElementById('points');
  var ctx = cv.getContext('2d');
  var X0 = 641, Y0 = 112;
  var seed = 20230417;
  function rnd() {
    seed = (seed * 1664525 + 1013904223) >>> 0;
    return seed / 4294967296;
  }
  function gauss() {
    return (rnd() + rnd() + rnd() + rnd() - 2) / 0.58;
  }
  var france = [[1203,157],[1230,145],[1247,158],[1260,170],[1277,180],[1293,187],[1293,200],[1333,217],[1353,228],[1390,237],[1377,260],[1370,297],[1350,310],[1340,337],[1350,347],[1347,367],[1344,397],[1355,413],[1371,443],[1359,457],[1332,477],[1304,463],[1276,457],[1253,470],[1243,480],[1245,503],[1240,503],[1197,497],[1173,487],[1134,480],[1110,467],[1120,447],[1124,417],[1126,383],[1128,357],[1123,350],[1100,330],[1097,317],[1088,300],[1067,290],[1043,282],[1027,277],[1025,258],[1045,247],[1067,243],[1080,255],[1110,252],[1115,230],[1107,207],[1122,206],[1123,220],[1140,220],[1163,210],[1187,202],[1202,185]];
  function inside(x, y) {
    var c = false;
    for (var i = 0, j = france.length - 1; i < france.length; j = i++) {
      var a = france[i], b = france[j];
      if ((a[1] > y) !== (b[1] > y) && x < (b[0] - a[0]) * (y - a[1]) / (b[1] - a[1]) + a[0]) c = !c;
    }
    return c;
  }
  function pick() {
    var r = rnd();
    if (r < 0.27) return '#3f6fc6';
    if (r < 0.55) return '#85cb7f';
    if (r < 0.96) return '#fdc05f';
    return '#f4535f';
  }
  function dot(x, y, col) {
    ctx.fillStyle = col || pick();
    ctx.fillRect(Math.round(x) - X0, Math.round(y) - Y0, 2, 2);
  }
  var n = 0;
  while (n < 850) {
    var x = 1025 + rnd() * 365, y = 145 + rnd() * 360;
    if (inside(x, y)) { dot(x, y); n++; }
  }
  // x, y, spread, points, solid green core points
  var towns = [
    [1294,372,16,300,30],[1300,395,22,90,0],[1262,165,13,110,12],[1310,465,17,110,10],[1358,455,9,70,6],[1335,470,12,50,0],
    [1250,480,8,45,4],[1241,495,3,18,0],[1141,407,7,50,12],[1198,457,6,40,14],[1113,310,6,36,10],[1112,273,4,14,8],
    [1035,260,5,22,8],[1044,282,5,14,4],[1376,253,3,18,12],[1332,248,4,12,8],[1177,303,4,16,8],[1143,300,4,14,5],
    [1188,218,7,30,6],[1163,212,3,10,8],[1112,208,3,8,5],[1272,225,3,8,5],[1272,265,3,8,7],[1247,368,4,14,7],
    [1320,415,6,26,4],[1345,365,7,30,4],[1110,462,3,12,4],[1220,155,5,14,2],[1360,290,5,22,3],[1338,230,6,20,3]
  ];
  towns.forEach(function (t) {
    for (var i = 0; i < t[3]; i++) {
      var px = t[0] + gauss() * t[2], py = t[1] + gauss() * t[2];
      if (inside(px, py)) dot(px, py);
    }
    for (var k = 0; k < t[4]; k++) dot(t[0] + gauss() * 2, t[1] + gauss() * 2, '#85cb7f');
  });
  // Paris: dense green core with a halo of mixed points
  for (var a = 0; a < 220; a++) {
    var ax = 1225 + gauss() * 21, ay = 240 + gauss() * 14;
    if (inside(ax, ay)) dot(ax, ay);
  }
  for (var p = 0; p < 420; p++) dot(1224 + gauss() * 6, 240 + gauss() * 6, rnd() < 0.92 ? '#85cb7f' : '#3f6fc6');
  // Corsica: points along the coast
  var cors = [[1404,497],[1403,518],[1420,485],[1425,503],[1423,520],[1416,535]];
  cors.forEach(function (c) {
    for (var i = 0; i < 6; i++) dot(c[0] + gauss() * 1.5, c[1] + gauss() * 4);
  });
})();
```
